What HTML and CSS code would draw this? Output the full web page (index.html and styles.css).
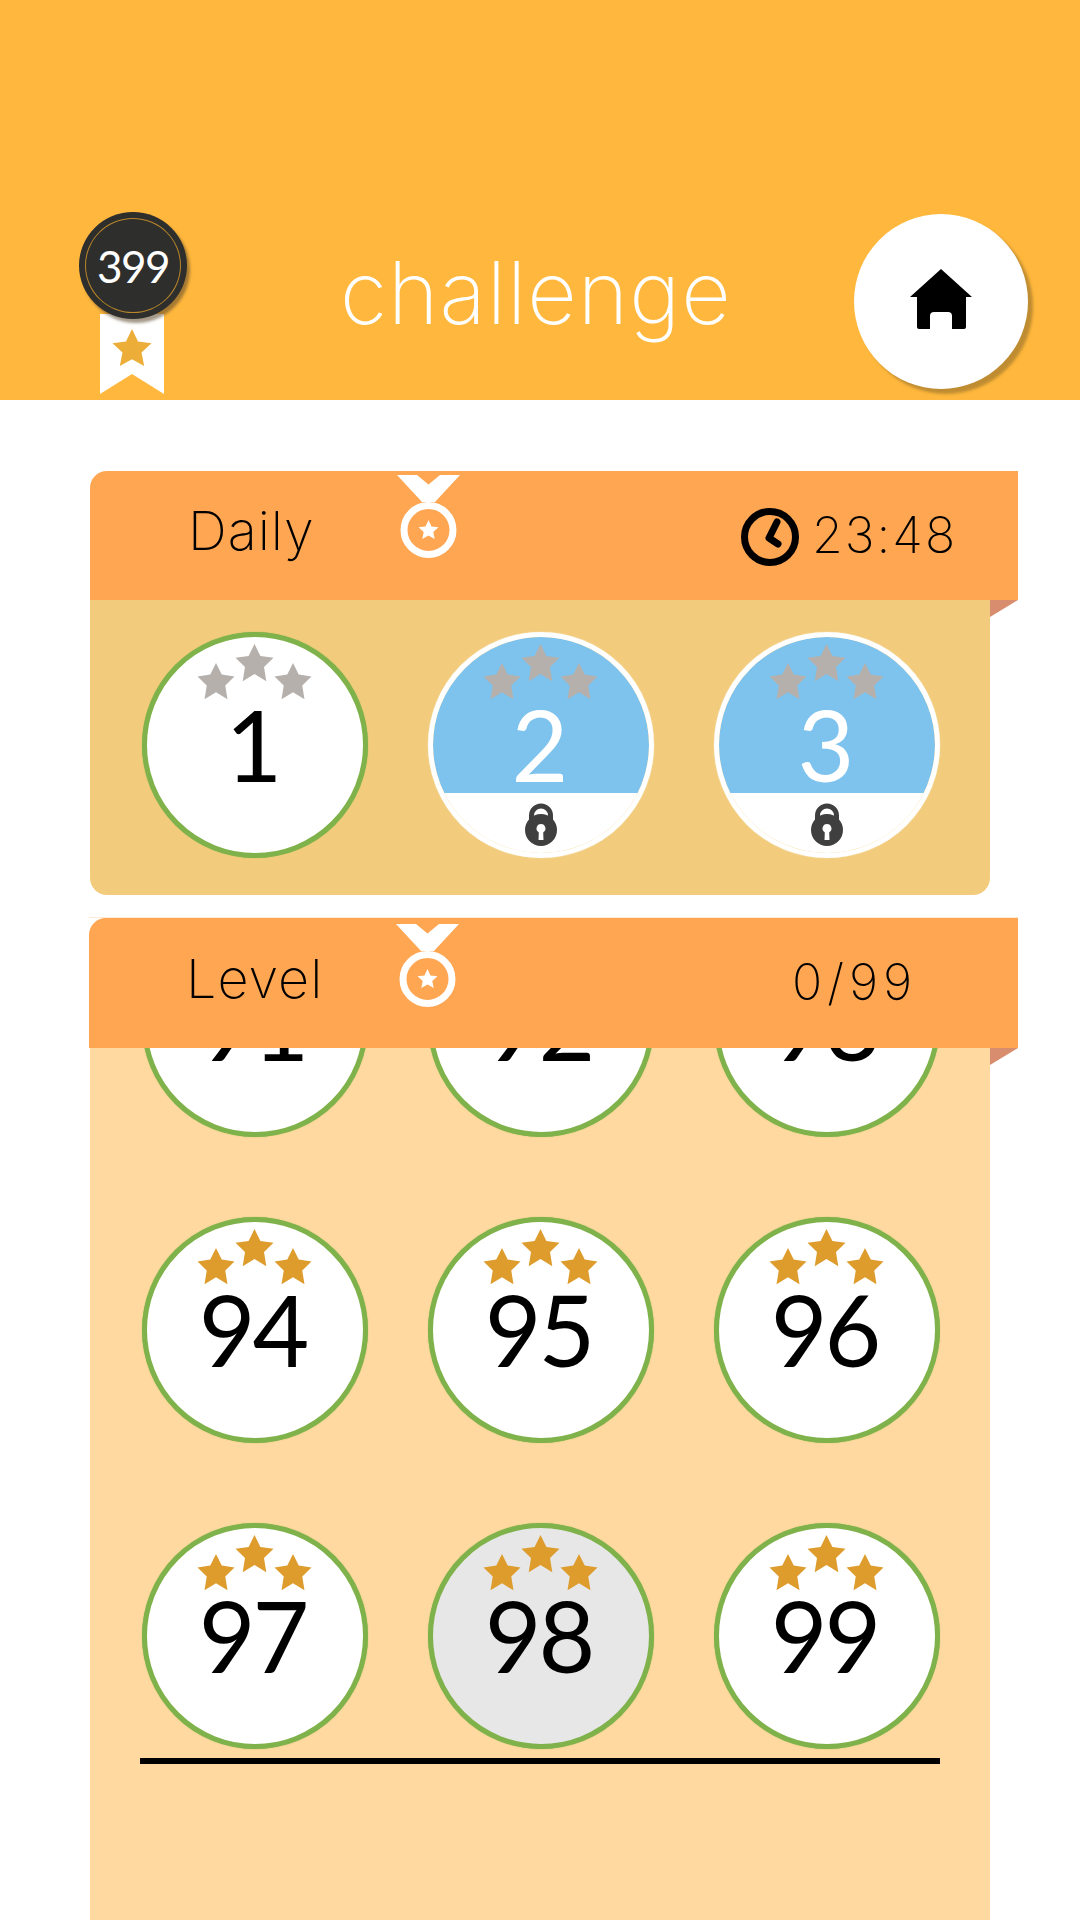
FILE: index.html
```html
<!DOCTYPE html>
<html lang="en">
<head>
<meta charset="utf-8">
<title>challenge</title>
<link rel="stylesheet" href="styles.css">
</head>
<body>
<svg class="defs" width="0" height="0" aria-hidden="true">
  <defs>
    <symbol id="star" viewBox="0 0 38 38">
      <path d="M19 0l5.900 11.900L38 13.800l-9.500 9.300 2.300 14.200L19 30 7.200 37.300 9.500 23.100 0 13.800l13.100-1.900z"/>
    </symbol>
    <symbol id="stars" viewBox="0 0 115 56">
      <use href="#star" x="0" y="19" width="38" height="37"/>
      <use href="#star" x="38" y="0" width="39" height="38"/>
      <use href="#star" x="77" y="19" width="38" height="37"/>
    </symbol>
    <symbol id="medal" viewBox="0 0 63 84">
      <path class="medal-fill" d="M0 0h20l11.500 9.500L43 0h20L38 27H25z"/>
      <circle class="medal-ring" cx="31.500" cy="55" r="24.500"/>
      <path class="medal-fill" d="M31.500 45l3 6.400 7 .8-5.200 4.800 1.400 7-6.200-3.500-6.200 3.500 1.400-7-5.200-4.800 7-.8z"/>
    </symbol>
    <symbol id="lock" viewBox="0 0 32 44">
      <path class="lock-shackle" d="M6.500 20v-6.500a9.500 9.500 0 0 1 19 0V20"/>
      <path class="lock-body" fill-rule="evenodd" d="M16 12a16 16 0 1 1 0 32 16 16 0 0 1 0-32zm0 10a4.500 4.500 0 0 0-2.200 8.400L13.500 38h5l-.3-7.600A4.500 4.500 0 0 0 16 22z"/>
    </symbol>
  </defs>
</svg>

<header class="top">
  <div class="badge">
    <div class="badge-disc"><span class="badge-ring">399</span></div>
    <svg class="ribbon" viewBox="0 0 64 80" aria-hidden="true">
      <path class="ribbon-fill" d="M0 0h64v80L32 60 0 80z"/>
      <path class="ribbon-star" d="M32 15l6 12.500 13.500 1.700-10 9.300 2.700 13.500L32 45.200 19.800 52l2.700-13.500-10-9.300L26 27.500z"/>
    </svg>
  </div>
  <h1 class="title">challenge</h1>
  <a class="home" aria-label="Home">
    <svg class="home-icon" viewBox="0 0 62 60" aria-hidden="true">
      <path d="M31 0l31 28h-6v30a2 2 0 0 1-2 2H42V47a4 4 0 0 0-4-4H24a4 4 0 0 0-4 4v13H9a2 2 0 0 1-2-2V28H0z"/>
    </svg>
  </a>
</header>

<main class="content">
  <section class="card card-daily">
    <div class="card-head head-daily">
      <span class="label">Daily</span>
      <svg class="medal"><use href="#medal"/></svg>
      <div class="timer">
        <svg class="clock" viewBox="0 0 58 58" aria-hidden="true">
          <circle cx="29" cy="29" r="25.500"/>
          <path d="M36 14L28 30l9 6"/>
        </svg>
        <span class="timer-text">23:48</span>
      </div>
    </div>
    <div class="card-body body-daily">
      <div class="grid">
        <div class="node"><svg class="stars grey"><use href="#stars"/></svg><span class="num">1</span></div>
        <div class="node locked"><svg class="stars grey"><use href="#stars"/></svg><span class="num">2</span><svg class="lock"><use href="#lock"/></svg></div>
        <div class="node locked"><svg class="stars grey"><use href="#stars"/></svg><span class="num">3</span><svg class="lock"><use href="#lock"/></svg></div>
      </div>
    </div>
  </section>

  <section class="card card-level">
    <div class="card-head head-level">
      <span class="label">Level</span>
      <svg class="medal"><use href="#medal"/></svg>
      <span class="progress">0/99</span>
    </div>
    <div class="card-body body-level">
      <div class="grid grid-scrolled">
        <div class="node"><svg class="stars gold"><use href="#stars"/></svg><span class="num">91</span></div>
        <div class="node"><svg class="stars gold"><use href="#stars"/></svg><span class="num">92</span></div>
        <div class="node"><svg class="stars gold"><use href="#stars"/></svg><span class="num">93</span></div>
        <div class="node"><svg class="stars gold"><use href="#stars"/></svg><span class="num">94</span></div>
        <div class="node"><svg class="stars gold"><use href="#stars"/></svg><span class="num">95</span></div>
        <div class="node"><svg class="stars gold"><use href="#stars"/></svg><span class="num">96</span></div>
        <div class="node"><svg class="stars gold"><use href="#stars"/></svg><span class="num">97</span></div>
        <div class="node pressed"><svg class="stars gold"><use href="#stars"/></svg><span class="num">98</span></div>
        <div class="node"><svg class="stars gold"><use href="#stars"/></svg><span class="num">99</span></div>
      </div>
      <div class="rule"></div>
    </div>
  </section>
</main>
</body>
</html>
```

FILE: styles.css
```css
* { box-sizing: border-box; }
html, body { margin: 0; height: 1920px; overflow: hidden; background: #fff; }
body { font-family: "Lato", "Liberation Sans", sans-serif; color: #000; }
.defs { position: absolute; }

.top {
  height: 400px;
  background: #ffb83d;
  display: flex;
  align-items: flex-start;
  padding: 212px 52px 0 79px;
}
.badge { width: 108px; display: flex; flex-direction: column; align-items: center; }
.badge-disc {
  position: relative;
  z-index: 1;
  width: 108px;
  height: 107px;
  padding: 6px;
  border-radius: 50%;
  background: #2e2e2c;
  box-shadow: 3px 4px 3px rgba(90, 70, 40, .55);
}
.badge-ring {
  display: flex;
  align-items: center;
  justify-content: center;
  height: 100%;
  border: 1.500px solid #b8862a;
  border-radius: 50%;
  color: #fff;
  font-size: 44px;
  letter-spacing: -1.500px;
}
.ribbon { width: 64px; height: 80px; margin: -5px 0 0 -2px; display: block; }
.ribbon-fill { fill: #fff; }
.ribbon-star { fill: #ecae38; }

.title {
  margin: 26px 0 0 153px;
  font-family: "Inter", "Lato", sans-serif;
  font-size: 86px;
  line-height: 110px;
  font-weight: 250;
  letter-spacing: 1px;
  color: #fff;
}
.home {
  margin: 2px 0 0 auto;
  width: 174px;
  height: 175px;
  border-radius: 50%;
  background: #fff;
  box-shadow: 5px 5px 3px rgba(170, 125, 45, .75);
  display: flex;
  align-items: flex-start;
  justify-content: center;
  padding-top: 55px;
}
.home-icon { width: 62px; height: 60px; fill: #000; }

.content { padding: 71px 0 0 90px; }
.card { position: relative; width: 900px; }
.card-level { margin-top: 23px; }
.card-level::before {
  content: "";
  position: absolute;
  left: -1px;
  top: -1px;
  width: 929px;
  height: 1px;
  background: #ffe9d2;
}
.card-head {
  position: relative;
  width: 928px;
  height: 129px;
  background: #ffa652;
  border-top-left-radius: 17px;
  display: flex;
  align-items: flex-start;
  padding-left: 98px;
  font-family: "Inter", "Lato", sans-serif;
  font-weight: 200;
}
.card-head::after {
  content: "";
  position: absolute;
  right: 0;
  top: 100%;
  width: 28px;
  height: 17px;
  background: #d98d6f;
  clip-path: polygon(0 0, 100% 0, 0 100%);
}
.head-level { width: 929px; height: 130px; margin-left: -1px; padding-left: 97px; }
.label { width: 209px; font-size: 54px; line-height: 60px; letter-spacing: 1px; margin-top: 30px; }
.head-level .label { width: 210px; margin-top: 31px; }
.medal { width: 63px; height: 84px; margin-top: 4px; flex: none; }
.head-level .medal { margin-top: 6px; }
.medal-fill { fill: #fff; }
.medal-ring { fill: none; stroke: #fff; stroke-width: 7; }

.timer { display: flex; align-items: flex-start; margin-left: 281px; margin-top: 37px; }
.clock { width: 58px; height: 58px; fill: none; stroke: #000; stroke-width: 7; stroke-linecap: round; stroke-linejoin: round; }
.timer-text { font-size: 50px; line-height: 56px; letter-spacing: 2px; margin: -1px 0 0 13px; }
.progress { font-size: 50px; line-height: 60px; letter-spacing: 5px; margin: 34px 0 0 333px; }

.card-body { overflow: hidden; padding-left: 52px; }
.body-daily { height: 295px; padding-top: 32px; background: #f2cc7c; border-radius: 0 0 17px 17px; }
.body-level { height: 872px; background: #ffd99f; }
.grid { display: grid; grid-template-columns: repeat(3, 226px); column-gap: 60px; row-gap: 80px; }
.grid-scrolled { margin-top: -137px; }

.node {
  width: 226px;
  height: 226px;
  padding: 7px 2px 0 0;
  border: 5px solid #7fb24a;
  border-radius: 50%;
  background: #fff;
  box-shadow: 0 0 1px #7fb24a;
  display: flex;
  flex-direction: column;
  align-items: center;
}
.pressed { background: #e7e7e7; }
.locked {
  border-color: #fff;
  box-shadow: 0 0 1px #fff;
  background: linear-gradient(#7dc3ee 156px, #fff 156px);
  background-origin: padding-box;
  background-clip: padding-box;
}
.stars { width: 115px; height: 56px; flex: none; }
.grey { fill: #b5b0ac; }
.gold { fill: #dd9c2c; }
.num { font-size: 98px; line-height: 84px; margin: 2px 0 0 -3px; letter-spacing: -3px; }
.locked .num { color: #fff; }
.lock { width: 32px; height: 44px; margin: 16px 0 0 2px; flex: none; }
.lock-shackle { fill: none; stroke: #3f3f3f; stroke-width: 5; }
.lock-body { fill: #3f3f3f; }

.rule { width: 800px; height: 6px; margin: 9px 0 0 -2px; background: #000; }
```
